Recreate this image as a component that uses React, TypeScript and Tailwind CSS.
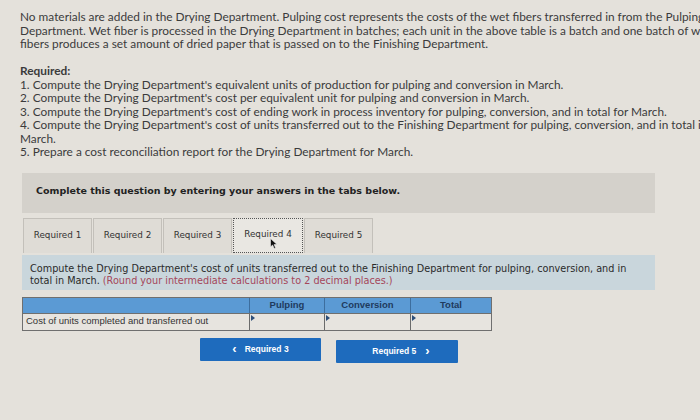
import React from "react";

const para = [
  "No materials are added in the Drying Department. Pulping cost represents the costs of the wet fibers transferred in from the Pulping",
  "Department. Wet fiber is processed in the Drying Department in batches; each unit in the above table is a batch and one batch of wet",
  "fibers produces a set amount of dried paper that is passed on to the Finishing Department.",
];
const req = [
  "1. Compute the Drying Department's equivalent units of production for pulping and conversion in March.",
  "2. Compute the Drying Department's cost per equivalent unit for pulping and conversion in March.",
  "3. Compute the Drying Department's cost of ending work in process inventory for pulping, conversion, and in total for March.",
  "4. Compute the Drying Department's cost of units transferred out to the Finishing Department for pulping, conversion, and in total in",
  "March.",
  "5. Prepare a cost reconciliation report for the Drying Department for March.",
];

function Cell({ w }: { w: string }) {
  return (
    <div className={`${w} relative h-full border-l border-[#6b6b6b] bg-[#e7e4df]`}>
      <div className="absolute left-[1px] top-[1px] w-0 h-0 border-t-[3px] border-b-[3px] border-l-[4px] border-t-transparent border-b-transparent border-l-[#2d4f7a]" />
    </div>
  );
}

export default function App() {
  const tabs = ["Required 1", "Required 2", "Required 3", "Required 4", "Required 5"];
  return (
    <div className="w-[700px] h-[420px] overflow-hidden bg-[#e4e1db] relative">
      <div className="pl-[20px] pt-[10px] font-['Lato',sans-serif] text-[11.85px] leading-[13.5px] text-[#3b3b3b]">
        {para.map((l, i) => (
          <div key={i} className="whitespace-nowrap">{l}</div>
        ))}
        <div className="h-[13.5px]" />
        <div className="font-bold whitespace-nowrap">Required:</div>
        {req.map((l, i) => (
          <div key={i} className="whitespace-nowrap">{l}</div>
        ))}
      </div>

      <div className="ml-[22px] mt-[14px] w-[633px] h-[40px] bg-[#d4d1cb] pl-[14px] pt-[11px] font-['DejaVu_Sans',sans-serif] font-bold text-[9.5px] text-[#222]">
        Complete this question by entering your answers in the tabs below.
      </div>

      <div className="ml-[23px] mt-[5px] flex gap-[1px] h-[35px] font-['DejaVu_Sans',sans-serif] text-[8.8px] text-[#333]">
        {tabs.map((t, i) =>
          i === 3 ? (
            <div key={t} className="relative w-[70px] h-full flex items-center justify-center bg-[#e9e7e2] border border-dotted border-[#555]">
              {t}
              <svg className="absolute left-[36px] top-[19px]" width="8" height="11" viewBox="0 0 8 11">
                <path d="M0.5 0.5 L0.5 9 L2.6 7 L4.2 10.5 L5.6 9.9 L4.1 6.5 L7 6.5 Z" fill="#111" stroke="#eee" strokeWidth="0.6" />
              </svg>
            </div>
          ) : (
            <div key={t} className="w-[69px] h-full flex items-center justify-center bg-[#dfdcd6] border border-[#c3c0ba] border-b-0">
              {t}
            </div>
          )
        )}
      </div>

      <div className="ml-[22px] mt-[2px] w-[633px] h-[35px] bg-[#c9d6dc] pl-[8px] pt-[8px] font-['DejaVu_Sans',sans-serif] text-[9.7px] leading-[12px] text-[#2a2a2a]">
        <div className="whitespace-nowrap">Compute the Drying Department's cost of units transferred out to the Finishing Department for pulping, conversion, and in</div>
        <div className="whitespace-nowrap">
          total in March. <span className="text-[#a5465a]">(Round your intermediate calculations to 2 decimal places.)</span>
        </div>
      </div>

      <div className="ml-[22px] mt-[7px] w-[470px] border border-[#6f6f6f]">
        <div className="flex h-[15px] bg-[#5b9ad4] font-['Liberation_Sans',sans-serif] font-bold text-[9.5px] text-[#1f3b5e]">
          <div className="w-[226px]" />
          <div className="w-[75px] border-l border-[#3d6e9e] flex items-center justify-center">Pulping</div>
          <div className="w-[86px] border-l border-[#3d6e9e] flex items-center justify-center">Conversion</div>
          <div className="flex-1 border-l border-[#3d6e9e] flex items-center justify-center">Total</div>
        </div>
        <div className="flex h-[17px] border-t border-[#6f6f6f] bg-[#e7e4df] font-['Liberation_Sans',sans-serif] text-[9.5px] text-[#333]">
          <div className="w-[226px] pl-[3px] flex items-center">Cost of units completed and transferred out</div>
          <Cell w="w-[75px]" />
          <Cell w="w-[86px]" />
          <Cell w="flex-1" />
        </div>
      </div>

      <div className="ml-[200px] mt-[7px] flex gap-[15px] items-start font-['Liberation_Sans',sans-serif] font-bold text-[8.5px] text-white">
        <div className="w-[121px] h-[23px] bg-[#1e6bbd] rounded-[1px] flex items-center justify-center gap-[8px]">
          <span className="text-[13px] leading-none mb-[2px]">&#8249;</span>
          <span>Required 3</span>
        </div>
        <div className="mt-[2px] w-[122px] h-[23px] bg-[#1e6bbd] rounded-[1px] flex items-center justify-center gap-[9px] pl-[8px]">
          <span>Required 5</span>
          <span className="text-[13px] leading-none mb-[2px]">&#8250;</span>
        </div>
      </div>
    </div>
  );
}
